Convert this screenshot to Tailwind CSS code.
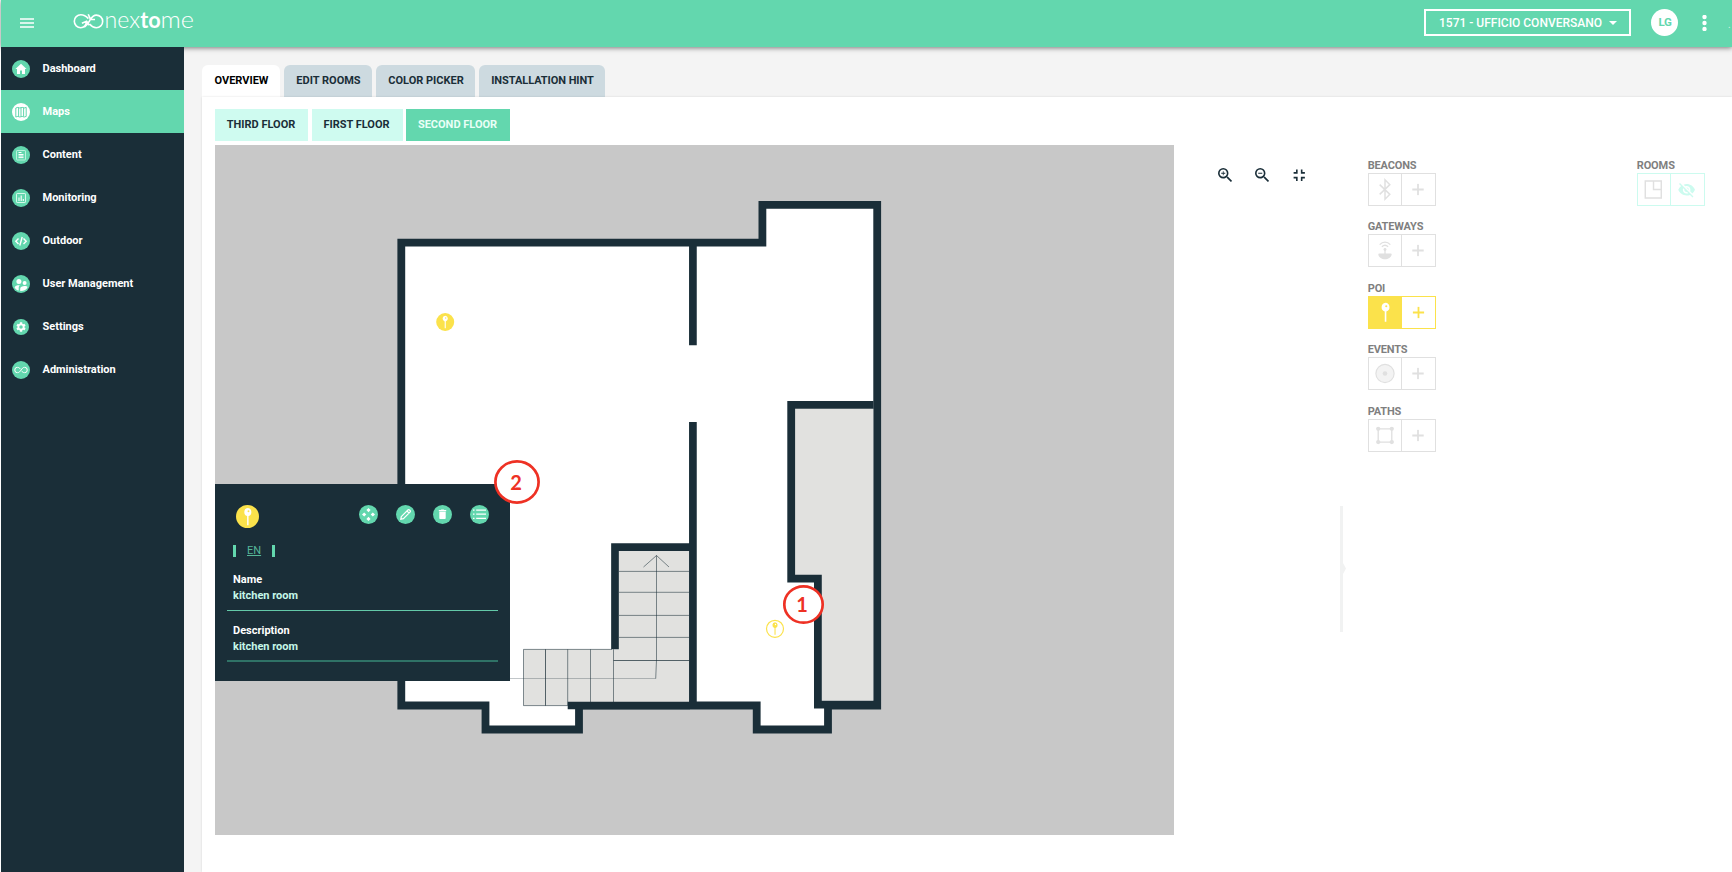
<!DOCTYPE html>
<html lang="en">
<head>
<meta charset="utf-8">
<title>Nextome - Maps</title>
<script src="https://cdn.jsdelivr.net/npm/@tailwindcss/browser@4"></script>
</head>
<body class="h-[872px] w-[1732px] overflow-hidden bg-white pl-px font-['Roboto',sans-serif] text-[11px] text-[#1a2e38]">
<svg class="hidden">
  <symbol id="pin" viewBox="0 0 10 22"><path fill="currentColor" fill-rule="evenodd" d="M5 1a4.500 4.700 0 0 1 .9 9.200V21H4.200V10.200A4.500 4.700 0 0 1 5 1Zm.8 2.600a1.100 1.100 0 1 0 0 2.200 1.100 1.100 0 0 0 0-2.200Z"/></symbol>
  <symbol id="plus" viewBox="0 0 12 12"><path d="M6 .3v11.400M.3 6h11.400" stroke="currentColor" stroke-width="1.800"/></symbol>
  <symbol id="loop" viewBox="0 0 28 14"><path d="M13 5.300C10.500 2.400 9 1.500 7 1.500a5.500 5.500 0 0 0 0 11c3 0 5-2.500 7-5.200 2-2.800 4-5.800 7-5.800a5.500 5.500 0 0 1 0 11c-2.600 0-4.300-1.700-6-3.800" fill="none" stroke="currentColor" stroke-width="2"/></symbol>
</svg>
<div class="flex h-full flex-col">
  <header class="relative flex h-[47px] shrink-0 items-center bg-[#63d7ae] pb-0.5 text-white shadow-[0_1px_5px_rgba(0,0,0,0.5)]">
    <svg class="ml-[19px] h-[10px] w-[14px]" viewBox="0 0 14 10"><path d="M0 1h14M0 5h14M0 9h14" stroke="#fff" stroke-width="1.600"/></svg>
    <svg class="ml-[38px] h-[34px] w-[124px] overflow-visible" viewBox="0 0 124 34">
      <g transform="translate(-.5 2.600) scale(1.080)" fill="none" stroke="#fff" stroke-width="1.500"><path d="M15.600 9.300C13.200 6.600 11 5.700 8.600 5.700a6 6 0 0 0 0 12c3 0 4.600-1.300 5.400-5.600m-4.400 1.500 4.400-1.800 2.500 3.600M12 17c3-2 4-4.500 5.500-7 1.400-2.300 3-4 5.500-4a5.800 5.800 0 0 1 0 11.700c-2.800 0-4.500-1.300-6.300-3.500M15.500 5.200l2 4.600 4.300.300"/></g>
      <g fill="#fff" font-family="Lato" font-size="23.500"><text x="32.500" y="21.500" font-weight="300" textLength="35.500" lengthAdjust="spacingAndGlyphs">nex</text><text x="68.300" y="21.500" font-weight="700" textLength="20.500" lengthAdjust="spacingAndGlyphs">to</text><text x="88.500" y="21.500" font-weight="300" textLength="33.500" lengthAdjust="spacingAndGlyphs">me</text></g>
    </svg>
    <div class="ml-auto flex h-[27px] w-[207px] items-center border-2 border-white pl-[13px] text-xs font-medium">1571 - UFFICIO CONVERSANO<svg class="ml-auto mr-[12px] h-1 w-2" viewBox="0 0 8 4"><path d="M0 0h8L4 4z" fill="#fff"/></svg></div>
    <div class="ml-[20px] flex size-[27px] items-center justify-center rounded-full bg-white pl-px text-[11.500px] font-bold tracking-[-0.300px] text-[#63d7ae]">LG</div>
    <svg class="ml-[24px] h-4 w-[5px]" viewBox="0 0 5 16" fill="#fff"><circle cx="2.500" cy="2" r="2.200"/><circle cx="2.500" cy="8" r="2.200"/><circle cx="2.500" cy="14" r="2.200"/></svg>
    <span class="ml-[21px] mr-0.5 w-[2px] pt-1 text-[10px] opacity-70">.</span>
  </header>
  <div class="flex min-h-0 flex-1">
    <nav class="relative w-[183px] shrink-0 bg-[#1a2e38] font-bold text-white">
      <a class="flex h-[43px] items-center gap-[12.500px] pl-[11px]"><svg class="size-[18px]" viewBox="0 0 18 18"><circle cx="9" cy="9" r="9" fill="#63d7ae"/><path d="M9 3.700 3.400 9H5v5h3v-3.500h2V14h3V9h1.600z" fill="#fff"/></svg><span class="pt-px">Dashboard</span></a>
      <a class="flex h-[43px] items-center gap-[12.500px] bg-[#63d7ae] pl-[11px]"><svg class="size-[18px]" viewBox="0 0 18 18"><circle cx="9" cy="9" r="9" fill="#fff"/><path d="M3.800 5v9l2-.6 2 .6 2.400-.6 2 .6 2-.6v-9l-2 .6-2-.6-2.400.6-2-.6zM6.600 4.500v9M9 4.500v9M11.600 4.500v9" fill="none" stroke="#63d7ae"/></svg><span class="pt-px">Maps</span></a>
      <a class="flex h-[43px] items-center gap-[12.500px] pl-[11px]"><svg class="size-[18px]" viewBox="0 0 18 18"><circle cx="9" cy="9" r="9" fill="#63d7ae"/><rect x="4.500" y="4.500" width="9" height="9.500" rx=".6" fill="none" stroke="#b9f2dc"/><path d="M6.500 6.500h3M6.500 8.500h5M6.500 10h5M6.500 11.600h5" stroke="#fff"/></svg><span class="pt-px">Content</span></a>
      <a class="flex h-[43px] items-center gap-[12.500px] pl-[11px]"><svg class="size-[18px]" viewBox="0 0 18 18"><circle cx="9" cy="9" r="9" fill="#63d7ae"/><rect x="4.500" y="4.500" width="9" height="9" rx=".6" fill="none" stroke="#d6f8ea"/><path d="M7 8.500V12M9.200 6.500V12M11.300 10v2" stroke="#fff" stroke-width="1.100"/></svg><span class="pt-px">Monitoring</span></a>
      <a class="flex h-[43px] items-center gap-[12.500px] pl-[11px]"><svg class="size-[18px]" viewBox="0 0 18 18"><circle cx="9" cy="9" r="9" fill="#63d7ae"/><path d="M6.500 6.500 3.800 9.200l2.700 2.700M11.500 6.500l2.700 2.700-2.700 2.700M10.200 5l-2.400 8.500" fill="none" stroke="#fff" stroke-width="1.400"/></svg><span class="pt-px">Outdoor</span></a>
      <a class="flex h-[43px] items-center gap-[12.500px] pl-[11px]"><svg class="size-[18px]" viewBox="0 0 18 18"><circle cx="9" cy="9" r="9" fill="#63d7ae"/><g fill="#fff"><circle cx="6.900" cy="6.600" r="2.500"/><circle cx="12.600" cy="8" r="2"/><path d="M2.600 12.500c.4-1.700 2.400-2.300 4.200-2.300l1.200.1c-1 .8-1.300 1.600-1.300 2.700v2.600c-1.800-.5-3.300-1.500-4.100-3.100ZM8.200 16v-2.300c0-1.600 2-2.700 4.400-2.700 1.300 0 2.400.3 3 .9-.9 2.600-3.900 4.300-7.400 4.100Z"/></g></svg><span class="pt-px">User Management</span></a>
      <a class="flex h-[43px] items-center gap-[12.500px] pl-[11px]"><svg class="size-[18px]" viewBox="0 0 18 18"><circle cx="9" cy="9" r="8" fill="#63d7ae"/><path transform="translate(3.200 3.200) scale(.485)" fill="#fff" d="M19.140 12.940c.04-.3.060-.61.060-.94 0-.32-.02-.64-.07-.94l2.030-1.580c.18-.14.23-.41.120-.61l-1.920-3.320c-.12-.22-.37-.29-.59-.22l-2.390.96c-.5-.38-1.030-.7-1.620-.94l-.36-2.540c-.04-.24-.24-.41-.48-.41h-3.840c-.24 0-.43.17-.47.41l-.36 2.540c-.59.240-1.130.57-1.620.94l-2.390-.96c-.22-.08-.47 0-.59.220L2.740 8.870c-.12.210-.08.470.12.610l2.030 1.580c-.05.300-.09.630-.09.940s.02.640.07.940l-2.030 1.580c-.18.140-.23.410-.12.610l1.920 3.320c.12.220.37.290.59.220l2.390-.96c.5.380 1.030.7 1.620.94l.36 2.540c.05.240.24.410.48.410h3.840c.24 0 .44-.17.470-.41l.36-2.540c.59-.24 1.130-.56 1.620-.94l2.390.96c.22.080.47 0 .59-.22l1.920-3.320c.12-.22.070-.47-.12-.61zM12 15.600a3.600 3.600 0 1 1 0-7.200 3.600 3.600 0 0 1 0 7.200z"/></svg><span class="pt-px">Settings</span></a>
      <a class="flex h-[43px] items-center gap-[12.500px] pl-[11px]"><svg class="size-[18px] text-white" viewBox="0 0 18 18"><circle cx="9" cy="9" r="9" fill="#63d7ae"/><use href="#loop" x="2" y="5.500" width="14" height="7"/></svg><span class="pt-px">Administration</span></a>
    </nav>
    <main class="flex min-w-0 flex-1 flex-col bg-[#f4f4f4] pl-[18px] pt-[18px]">
      <div class="flex h-8 shrink-0 gap-1 font-bold">
        <div class="flex w-[78px] items-center justify-center rounded-t-md bg-white pl-px text-black">OVERVIEW</div>
        <div class="flex w-[88px] items-center justify-center rounded-t-md bg-[#cddae0] pl-px">EDIT ROOMS</div>
        <div class="flex w-[99px] items-center justify-center rounded-t-md bg-[#cddae0] pl-px">COLOR PICKER</div>
        <div class="flex w-[126px] items-center justify-center rounded-t-md bg-[#cddae0] pl-px tracking-[-0.060px]">INSTALLATION HINT</div>
      </div>
      <section class="flex min-h-0 flex-1 bg-white pl-[13px] pt-3 shadow-[0_0_2px_rgba(0,0,0,0.12)]">
        <div class="w-[959px] shrink-0">
          <div class="flex h-8 font-bold">
            <div class="mr-[3.500px] flex w-[93px] items-center justify-center bg-[#cffbf0] pr-px pt-px">THIRD FLOOR</div>
            <div class="mr-[3.500px] flex w-[91px] items-center justify-center bg-[#cffbf0] pr-px pt-px">FIRST FLOOR</div>
            <div class="flex w-[104px] items-center justify-center bg-[#63d7ae] pr-px pt-px text-[#e9fff7]">SECOND FLOOR</div>
          </div>
          <div class="relative mt-1 h-[690px] bg-[#c8c8c8]">
            <svg class="block h-[690px] w-[959px]" viewBox="215 145 959 690">
              <path d="M401.300 242.600H762.400V204.900H877.200V705.500H828V729.500H756.700V705.500H579V729.500H485.500V705.500H401.300Z" fill="#fff" stroke="#1a2e38" stroke-width="7.800"/>
              <path d="M795 408.700h78.200v292h-51.500V575H795Z" fill="#e1e1df"/>
              <path d="M873.500 404.900H791.200V578.700H817.900V704.600H877" fill="none" stroke="#1a2e38" stroke-width="7.800"/>
              <path d="M619 551h70v151H567.700v3.700H523.500V649.300H619Z" fill="#e1e1df"/>
              <g fill="none" stroke="#1a2e38" stroke-width=".9">
                <path opacity=".6" d="M619 571.400h70M619 592.300h70M619 615.400h70M619 637.400h70M613.500 649.300V702M590.500 649.300V702M567.700 649.300v56.400M567.700 705.600H523.500V649.400H612M656.500 555.500V660l-.8 18.700M643.500 567l13-11.500L669 567"/>
                <path opacity=".8" d="M613.500 660.500H689M545.500 649.300v56.400"/><path opacity=".3" d="M510 678.500h145.500"/>
              </g>
              <path d="M692.900 244V345.300M692.900 422V704M691 547.200H615V649.300M567.700 705.500H690" fill="none" stroke="#1a2e38" stroke-width="7.700"/>
              <circle cx="445.200" cy="322" r="9" fill="#fbe24b"/><use href="#pin" x="442" y="315" width="6.400" height="14" class="text-white"/>
              <circle cx="775" cy="628.800" r="8.500" fill="#fff" stroke="#fbe24b" stroke-width="1.200"/><use href="#pin" x="771.800" y="621.500" width="6.400" height="14" class="text-[#fbe24b]"/>
              <ellipse cx="803.500" cy="604.500" rx="19.200" ry="18.200" fill="#fff" stroke="#ee3124" stroke-width="2.700"/>
              <text x="802" y="612" text-anchor="middle" font-family="Lato" font-size="20" font-weight="700" fill="#ee3124">1</text>
            </svg>
            <div class="absolute left-0 top-[338.500px] h-[197.500px] w-[295px] bg-[#1a2e38] px-3 font-bold">
              <div class="flex h-[61px] items-center pt-px">
                <svg class="ml-[9px] mt-1 size-[23px]" viewBox="0 0 23 23"><circle cx="11.500" cy="11.500" r="11.500" fill="#fbe24b"/><use href="#pin" x="7.500" y="2.200" width="8.600" height="19" class="text-white"/></svg>
                <div class="ml-[100px] flex gap-[18px]">
                  <svg class="size-[19px]" viewBox="0 0 19 19"><circle cx="9.500" cy="9.500" r="9.500" fill="#63d7ae"/><path d="m9.500 3 2.100 2.100-2.100 2.200-2.100-2.200zM9.500 11.700l2.100 2.200L9.500 16l-2.100-2.100zM5.200 7.400l2.100 2.100-2.100 2.100L3 9.500zM13.800 7.400 16 9.500l-2.200 2.100-2.100-2.100z" fill="#fff"/></svg>
                  <svg class="size-[19px]" viewBox="0 0 19 19"><circle cx="9.500" cy="9.500" r="9.500" fill="#63d7ae"/><path d="m5.300 11.600 6.600-6.600q.8-.8 1.600 0l.5.500q.8.800 0 1.600l-6.600 6.600-2.600.500zM11 6l2.100 2.100" fill="none" stroke="#fff" stroke-width="1.200"/></svg>
                  <svg class="size-[19px]" viewBox="0 0 19 19"><circle cx="9.500" cy="9.500" r="9.500" fill="#63d7ae"/><path d="M6.300 6.800h6.400v6.500q0 .8-.8.800H7.100q-.8 0-.8-.8zM5.800 5.100h2l.5-.6h2.400l.5.600h2v1.100H5.800z" fill="#fff"/></svg>
                  <svg class="size-[19px]" viewBox="0 0 19 19"><circle cx="9.500" cy="9.500" r="9.500" fill="#63d7ae"/><path d="M6.200 5.200H16M6.200 9.200H16M6.200 13.300H16M3 5.200h1.500M3 9.200h1.500M3 13.300h1.500" stroke="#fff" stroke-width="1.300"/></svg>
                </div>
              </div>
              <div class="ml-1.5 flex h-3 w-[42px] items-center justify-between border-x-[3px] border-[#63d7ae] px-[11px] pt-0.5 font-normal text-[#55b698] underline">EN</div>
              <div class="mt-[15px] h-[39px] border-b border-[#63c9a8] pl-1.5 leading-[16.500px] text-white">Name<br><span class="text-[#c5f7e8]">kitchen room</span></div>
              <div class="mt-3 h-[39px] border-b-2 border-[#2f7266] pl-1.5 leading-[16.500px] text-white">Description<br><span class="text-[#c5f7e8]">kitchen room</span></div>
            </div>
            <svg class="absolute left-[279px] top-[314px] h-[46px] w-[46px]" viewBox="0 0 46 46"><ellipse cx="23" cy="23" rx="21.600" ry="20.600" fill="#fff" stroke="#ee3124" stroke-width="2.700"/><text x="22" y="30.700" text-anchor="middle" font-family="Lato" font-size="20" font-weight="700" fill="#ee3124">2</text></svg>
          </div>
        </div>
        <div class="flex shrink-0 gap-[22.500px] pl-[43.700px] pt-[59px]">
          <svg class="size-[14.500px]" viewBox="3 3 18 18" fill="#1a2e38"><path d="M15.500 14h-.79l-.28-.27A6.471 6.471 0 0 0 16 9.500 6.500 6.500 0 1 0 9.500 16c1.610 0 3.090-.59 4.230-1.570l.27.280v.79l5 4.990L20.490 19l-4.990-5zm-6 0C7.010 14 5 11.990 5 9.500S7.010 5 9.500 5 14 7.010 14 9.500 11.990 14 9.500 14zm.5-7H9v2H7v1h2v2h1v-2h2V9h-2z"/></svg>
          <svg class="size-[14.500px]" viewBox="3 3 18 18" fill="#1a2e38"><path d="M15.500 14h-.79l-.28-.27A6.471 6.471 0 0 0 16 9.500 6.500 6.500 0 1 0 9.500 16c1.610 0 3.090-.59 4.230-1.570l.27.280v.79l5 4.990L20.490 19l-4.990-5zm-6 0C7.010 14 5 11.990 5 9.500S7.010 5 9.500 5 14 7.010 14 9.500 11.990 14 9.500 14zM7 9h5v1H7z"/></svg>
          <svg class="size-[14.500px]" viewBox="3 3 18 18" fill="#1a2e38"><path d="M5 16h3v3h2v-5H5v2zm3-8H5v2h5V5H8v3zm6 11h2v-3h3v-2h-5v5zm2-11V5h-2v5h5V8h-3z"/></svg>
        </div>
        <svg class="ml-[33.500px] mt-[397px] h-[126px] w-1.5 shrink-0" viewBox="0 0 6 126"><path d="M0 0h3v57l3 5.500-3 5.500v58H0z" fill="#f1f2f2"/></svg>
        <div class="ml-[22px] flex w-[68px] shrink-0 flex-col pt-12 font-bold tracking-[-0.150px] text-[#7f7f7f]">
          <div class="h-[61.400px]"><p class="h-4 pt-px leading-[15px]">BEACONS</p><div class="flex h-[33px] w-[68px] divide-x divide-[#e0e0e0] border border-[#e0e0e0] text-[#e0e0e0]"><svg class="h-full w-[33px] shrink-0" viewBox="0 0 33 31"><path d="m11 10.500 10.500 10-5 5v-20l5 5-10.500 10" fill="none" stroke="currentColor" stroke-width="1.500"/></svg><svg class="h-full w-[33px] shrink-0" viewBox="0 0 33 31"><use href="#plus" x="10" y="9.500" width="12" height="12"/></svg></div></div>
          <div class="h-[61.400px]"><p class="h-4 pt-px leading-[15px]">GATEWAYS</p><div class="flex h-[33px] w-[68px] divide-x divide-[#e0e0e0] border border-[#e0e0e0] text-[#e0e0e0]"><svg class="h-full w-[33px] shrink-0" viewBox="0 0 33 31"><path d="M11 9.500c3.200-3.500 7.800-3.500 11 0M13.300 11.700c2-2 4.400-2 6.400 0M16.500 15v5" fill="none" stroke="currentColor" stroke-width="1.300"/><circle cx="16.500" cy="14.500" r="1.500" fill="currentColor"/><path d="M10.500 18.500h12q1 0 .9 1c-.5 3-3.600 4.900-6.900 4.900s-6.500-1.900-6.900-4.900q-.1-1 .9-1Z" fill="currentColor"/></svg><svg class="h-full w-[33px] shrink-0" viewBox="0 0 33 31"><use href="#plus" x="10" y="9.500" width="12" height="12"/></svg></div></div>
          <div class="h-[61.400px]"><p class="h-4 pt-px leading-[15px]">POI</p><div class="flex h-[33px] w-[68px] border border-[#fbe24b] text-[#fbe24b]"><svg class="h-full w-[33px] shrink-0 bg-[#fbe24b] text-white" viewBox="0 0 33 31"><use href="#pin" x="11.700" y="4.800" width="9.600" height="21"/></svg><svg class="h-full w-[33px] shrink-0" viewBox="0 0 33 31"><use href="#plus" x="10.500" y="9.500" width="12" height="12"/></svg></div></div>
          <div class="h-[61.400px]"><p class="h-4 pt-px leading-[15px]">EVENTS</p><div class="flex h-[33px] w-[68px] divide-x divide-[#e0e0e0] border border-[#e0e0e0] text-[#e0e0e0]"><svg class="h-full w-[33px] shrink-0" viewBox="0 0 33 31"><circle cx="16.500" cy="15.500" r="9.400" fill="#f3f3f3" stroke="currentColor" stroke-width="1.200"/><circle cx="16.500" cy="15.500" r="2.400" fill="currentColor"/></svg><svg class="h-full w-[33px] shrink-0" viewBox="0 0 33 31"><use href="#plus" x="10" y="9.500" width="12" height="12"/></svg></div></div>
          <div class="h-[61.400px]"><p class="h-4 pt-px leading-[15px]">PATHS</p><div class="flex h-[33px] w-[68px] divide-x divide-[#e0e0e0] border border-[#e0e0e0] text-[#e0e0e0]"><svg class="h-full w-[33px] shrink-0" viewBox="0 0 33 31"><path d="M9.500 8.600h14v13.700h-14z" fill="none" stroke="currentColor" stroke-width="1.400"/><g fill="currentColor"><circle cx="9.500" cy="8.600" r="2.200"/><circle cx="23.500" cy="8.600" r="2.200"/><circle cx="9.500" cy="22.300" r="2.200"/><circle cx="23.500" cy="22.300" r="2.200"/></g></svg><svg class="h-full w-[33px] shrink-0" viewBox="0 0 33 31"><use href="#plus" x="10" y="9.500" width="12" height="12"/></svg></div></div>
        </div>
        <div class="ml-[201px] w-[68px] shrink-0 pt-12 font-bold tracking-[-0.100px] text-[#7f7f7f]"><p class="h-4 pt-px leading-[15px]">ROOMS</p><div class="flex h-[33px] w-[68px] divide-x divide-[#ccfbef] border border-[#ccfbef]"><svg class="h-full w-[33px] shrink-0" viewBox="0 0 33 31"><path d="M7.500 6.800H24v17.400H7.500zM16 6.800V15.500h8" fill="none" stroke="#e0e0e0" stroke-width="1.500"/></svg><svg class="h-full w-[33px] shrink-0 text-[#ccfbef]" viewBox="0 0 33 31"><path transform="translate(6.500 6.700) scale(.76)" fill="currentColor" d="M12 7c2.760 0 5 2.240 5 5 0 .65-.13 1.260-.36 1.830l2.920 2.920c1.510-1.260 2.700-2.890 3.430-4.750-1.730-4.390-6-7.500-11-7.500-1.400 0-2.740.25-3.980.7l2.160 2.160C10.740 7.130 11.350 7 12 7zM2 4.270l2.280 2.280.46.460C3.080 8.300 1.780 10.020 1 12c1.730 4.390 6 7.500 11 7.500 1.550 0 3.030-.3 4.380-.84l.42.420L19.730 22 21 20.730 3.270 3 2 4.270zM7.530 9.800l1.550 1.550c-.05.210-.08.430-.08.650 0 1.660 1.340 3 3 3 .22 0 .44-.03.650-.08l1.550 1.550c-.67.330-1.410.53-2.200.53-2.760 0-5-2.240-5-5 0-.79.200-1.530.53-2.200zm4.310-.78 3.150 3.150.02-.16c0-1.660-1.340-3-3-3l-.17.010z"/></svg></div></div>
      </section>
    </main>
  </div>
</div>
</body>
</html>
